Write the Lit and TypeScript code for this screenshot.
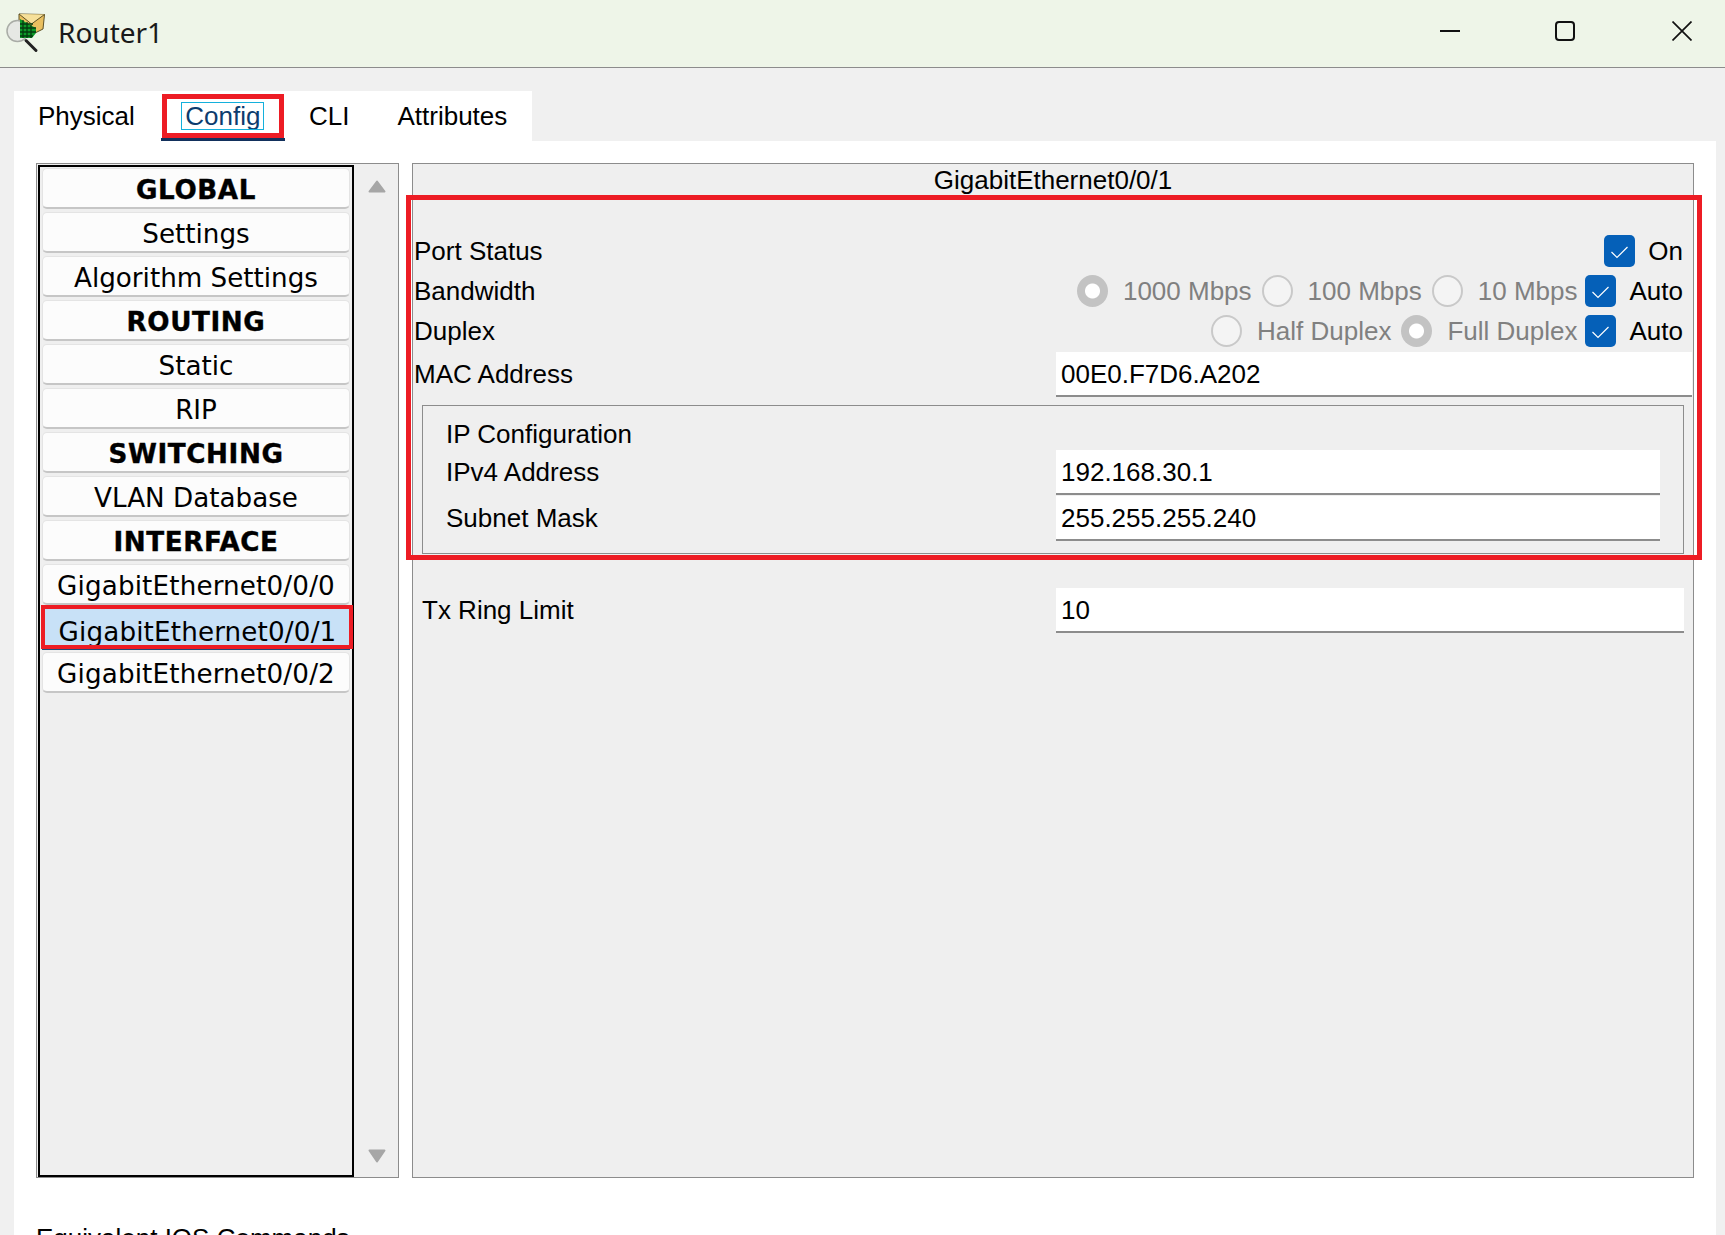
import { LitElement, css, html } from 'lit';
import { customElement } from 'lit/decorators.js';

const menu = [
  { label: 'GLOBAL', head: true },
  { label: 'Settings' },
  { label: 'Algorithm Settings' },
  { label: 'ROUTING', head: true },
  { label: 'Static' },
  { label: 'RIP' },
  { label: 'SWITCHING', head: true },
  { label: 'VLAN Database' },
  { label: 'INTERFACE', head: true },
  { label: 'GigabitEthernet0/0/0', port: true },
  { label: 'GigabitEthernet0/0/1', port: true, selected: true },
  { label: 'GigabitEthernet0/0/2', port: true },
];

const tabs = ['Physical', 'Config', 'CLI', 'Attributes'];

const check = html`<span class="check">
  <svg width="31" height="32" viewBox="0 0 31 32">
    <path d="M7.5 17l5.5 5.5L23.5 12" fill="none" stroke="#fff" stroke-width="1.2" />
  </svg>
</span>`;

const radio = (on: boolean, label: string) => html`<span class="opt">
  <span class="radio ${on ? 'on' : ''}"></span>
  <span class="off-text">${label}</span>
</span>`;

@customElement('app-root')
export class AppRoot extends LitElement {
  static styles = css`
    :host {
      display: block;
      height: 1235px;
      overflow: hidden;
      background: #f0f0f0;
      color: #000;
      font: 26px/30px 'Liberation Sans', Arial, sans-serif;
    }

    .titlebar {
      display: flex;
      align-items: center;
      height: 67px;
      border-bottom: 1px solid #8c8c8c;
      background: #eef5e8;
    }

    .app-icon {
      margin-left: 6px;
      flex: none;
    }

    .title {
      margin: 0 0 4px 12px;
      font: 28px/34px 'Noto Sans', sans-serif;
      color: #1a1a1a;
    }

    .win {
      display: flex;
      margin: 0 33px 5px auto;
      gap: 95px;
    }

    .win svg:last-child {
      margin-left: 2px;
    }

    .content {
      padding: 23px 9px 0 14px;
    }

    .tabs {
      display: flex;
      box-sizing: border-box;
      width: 518px;
      height: 50px;
      background: #fff;
    }

    .tab {
      position: relative;
      padding: 10px 24px 0;
    }

    .tab:first-child {
      padding-right: 26px;
    }

    .tab.active {
      padding: 10px 24.5px 0;
      color: #0d3c6e;
      box-shadow: inset 0 -3px #12305c;
    }

    .tab.active .focus {
      position: absolute;
      left: 20px;
      right: 21px;
      top: 11px;
      height: 26px;
      border: 1px solid #14b0dc;
    }

    .tab.active::after {
      content: '';
      position: absolute;
      left: 1px;
      right: 1px;
      top: 3px;
      bottom: 3px;
      border: 5px solid #ed1c24;
    }

    .page {
      display: grid;
      grid-template-columns: 363px 1fr;
      align-content: start;
      gap: 0 13px;
      height: 1100px;
      padding: 22px 22px 0;
      background: #fff;
    }

    .left {
      display: flex;
      height: 1015px;
      box-sizing: border-box;
      border: 1px solid #8c8c8c;
      background: #efefef;
    }

    .list {
      display: flex;
      flex-direction: column;
      gap: 3px;
      box-sizing: border-box;
      width: 316px;
      margin: 1px 0 0 1px;
      padding: 1px 2px;
      border: 2px solid #000;
    }

    .item {
      box-sizing: border-box;
      height: 41px;
      border: 1px solid #e4e4e4;
      border-bottom: 2px solid #c6c6c6;
      border-radius: 5px;
      background: #fcfcfc;
      font: 26.2px/43px 'DejaVu Sans', Verdana, sans-serif;
      text-align: center;
      white-space: nowrap;
    }

    .item.head {
      font-weight: 700;
      letter-spacing: 0.6px;
      -webkit-text-stroke: 0.4px #000;
    }

    .item.port {
      letter-spacing: 0.15px;
    }

    .item.selected {
      position: relative;
      border: 0;
      border-radius: 0;
      background: #c8e1f7;
      padding-left: 3px;
      line-height: 48px;
      box-shadow: 0 1px #1d4a7a;
    }

    .item.selected::after {
      content: '';
      position: absolute;
      left: -1px;
      right: -3px;
      top: -3px;
      bottom: 0;
      border: 4.5px solid #ed1c24;
    }

    .scroll {
      display: flex;
      flex-direction: column;
      justify-content: space-between;
      align-items: center;
      flex: 1;
      padding: 16px 0 14px 2px;
    }

    .right {
      position: relative;
      height: 1015px;
      box-sizing: border-box;
      border: 1px solid #8c8c8c;
      background: #efefef;
    }

    .head-line {
      height: 32px;
      line-height: 32px;
      text-align: center;
    }

    .row {
      display: flex;
      align-items: center;
      height: 32px;
      margin-top: 8px;
      padding: 0 10px 0 1px;
    }

    .row.first {
      margin-top: 39px;
    }

    .row .spacer {
      margin-left: auto;
    }

    .opt {
      display: flex;
      align-items: center;
      gap: 15px;
      margin-right: 10px;
    }

    .opt.last {
      margin-right: 7px;
    }

    .check {
      width: 31px;
      height: 32px;
      border-radius: 5px;
      background: #0560b8;
    }

    .check svg {
      display: block;
    }

    .chk-label {
      margin-left: 14px;
    }

    .first .chk-label {
      margin-left: 13px;
    }

    .radio {
      box-sizing: border-box;
      width: 31px;
      height: 32px;
      border: 2px solid #c9c9c9;
      border-radius: 50%;
      background: #f4f4f4;
    }

    .radio.on {
      border: 0;
      background: radial-gradient(circle, #fff 0 7px, #c3c3c3 8px);
    }

    .off-text {
      color: #808080;
    }

    .field-row {
      display: flex;
      align-items: center;
      justify-content: space-between;
    }

    .field-row > span {
      padding-bottom: 2px;
    }

    .field {
      box-sizing: border-box;
      height: 45px;
      padding-left: 5px;
      border-bottom: 2px solid #8c8c8c;
      background: #fff;
      line-height: 44px;
    }

    .mac {
      height: 45px;
      margin-top: 5px;
      padding: 0 1px;
    }

    .mac .field {
      width: 636px;
    }

    .group {
      box-sizing: border-box;
      height: 149px;
      margin: 8px 9px 0 9px;
      padding: 15px 23px 0 23px;
      border: 1px solid #8c8c8c;
    }

    .group-title {
      height: 29px;
      line-height: 26px;
    }

    .group .field {
      width: 604px;
    }

    .group .field-row + .field-row {
      margin-top: 1px;
    }

    .tx {
      margin: 34px 9px 0 9px;
    }

    .tx .field {
      width: 628px;
    }

    .annot {
      position: absolute;
      left: -7px;
      right: -9px;
      top: 31px;
      height: 365px;
      box-sizing: border-box;
      border: 5px solid #ed1c24;
      pointer-events: none;
    }

    .equiv {
      grid-column: 1 / -1;
      margin-top: 45px;
    }
  `;

  render() {
    return html`
      <div class="titlebar">
        ${this.renderAppIcon()}
        <span class="title">Router1</span>
        <div class="win">
          <svg width="20" height="20" viewBox="0 0 20 20">
            <path d="M0 10h20" stroke="#111" stroke-width="2" />
          </svg>
          <svg width="20" height="20" viewBox="0 0 20 20">
            <rect x="1" y="1" width="18" height="18" rx="3" fill="none" stroke="#111" stroke-width="2" />
          </svg>
          <svg width="20" height="20" viewBox="0 0 20 20">
            <path d="M.5.5l19 19M19.5.5l-19 19" stroke="#111" stroke-width="1.7" />
          </svg>
        </div>
      </div>
      <div class="content">
        <div class="tabs">
          ${tabs.map((t) =>
            t === 'Config'
              ? html`<div class="tab active"><span class="focus"></span>${t}</div>`
              : html`<div class="tab">${t}</div>`,
          )}
        </div>
        <div class="page">
          <div class="left">
            <div class="list">
              ${menu.map(
                (m) =>
                  html`<div
                    class="item ${m.head ? 'head' : ''} ${m.port ? 'port' : ''} ${m.selected
                      ? 'selected'
                      : ''}"
                  >
                    ${m.label}
                  </div>`,
              )}
            </div>
            <div class="scroll">
              <svg width="18" height="13" viewBox="0 0 18 13">
                <path d="M9 1.5L16.5 11.5H1.5z" fill="#a6a6a6" stroke="#a6a6a6" stroke-width="2" stroke-linejoin="round" />
              </svg>
              <svg width="18" height="14" viewBox="0 0 18 14">
                <path d="M9 12.5L16.5 1.5H1.5z" fill="#a6a6a6" stroke="#a6a6a6" stroke-width="2" stroke-linejoin="round" />
              </svg>
            </div>
          </div>
          <div class="right">
            <div class="head-line">GigabitEthernet0/0/1</div>
            <div class="row first">
              <span>Port Status</span>
              <span class="spacer"></span>
              ${check}<span class="chk-label">On</span>
            </div>
            <div class="row">
              <span>Bandwidth</span>
              <span class="spacer"></span>
              ${radio(true, '1000 Mbps')} ${radio(false, '100 Mbps')}
              <span class="opt last">
                <span class="radio"></span>
                <span class="off-text">10 Mbps</span>
              </span>
              ${check}<span class="chk-label">Auto</span>
            </div>
            <div class="row">
              <span>Duplex</span>
              <span class="spacer"></span>
              ${radio(false, 'Half Duplex')}
              <span class="opt last">
                <span class="radio on"></span>
                <span class="off-text">Full Duplex</span>
              </span>
              ${check}<span class="chk-label">Auto</span>
            </div>
            <div class="field-row mac">
              <span>MAC Address</span>
              <div class="field">00E0.F7D6.A202</div>
            </div>
            <div class="group">
              <div class="group-title">IP Configuration</div>
              <div class="field-row">
                <span>IPv4 Address</span>
                <div class="field">192.168.30.1</div>
              </div>
              <div class="field-row">
                <span>Subnet Mask</span>
                <div class="field">255.255.255.240</div>
              </div>
            </div>
            <div class="field-row tx">
              <span>Tx Ring Limit</span>
              <div class="field">10</div>
            </div>
            <div class="annot"></div>
          </div>
          <div class="equiv">Equivalent IOS Commands</div>
        </div>
      </div>
    `;
  }

  renderAppIcon() {
    return html`<svg class="app-icon" width="40" height="42" viewBox="0 0 40 42">
      <path d="M13 1L38.5 1.5 37 16 30 19.500 13 12z" fill="#e9bf5f" stroke="#5f5226" stroke-width="1" />
      <path d="M13 1L25.500 11 38.500 1.500" fill="#f6e09a" stroke="#5f5226" stroke-width="1" />
      <circle cx="11.500" cy="18" r="10.500" fill="#e6e8e4" stroke="#a9aca6" stroke-width="1.500" />
      <path d="M14 6L26 13 30 15V20L26 25H14z" fill="#0c9a28" />
      <path d="M17 7V25M21 9V25M25 12V25M14 11H27M14 15H30M14 19H30M14 23H27" stroke="#053b10" stroke-width="1.300" />
      <path d="M20 27.500L30 37.500" stroke="#222" stroke-width="3" stroke-linecap="round" />
    </svg>`;
  }
}
